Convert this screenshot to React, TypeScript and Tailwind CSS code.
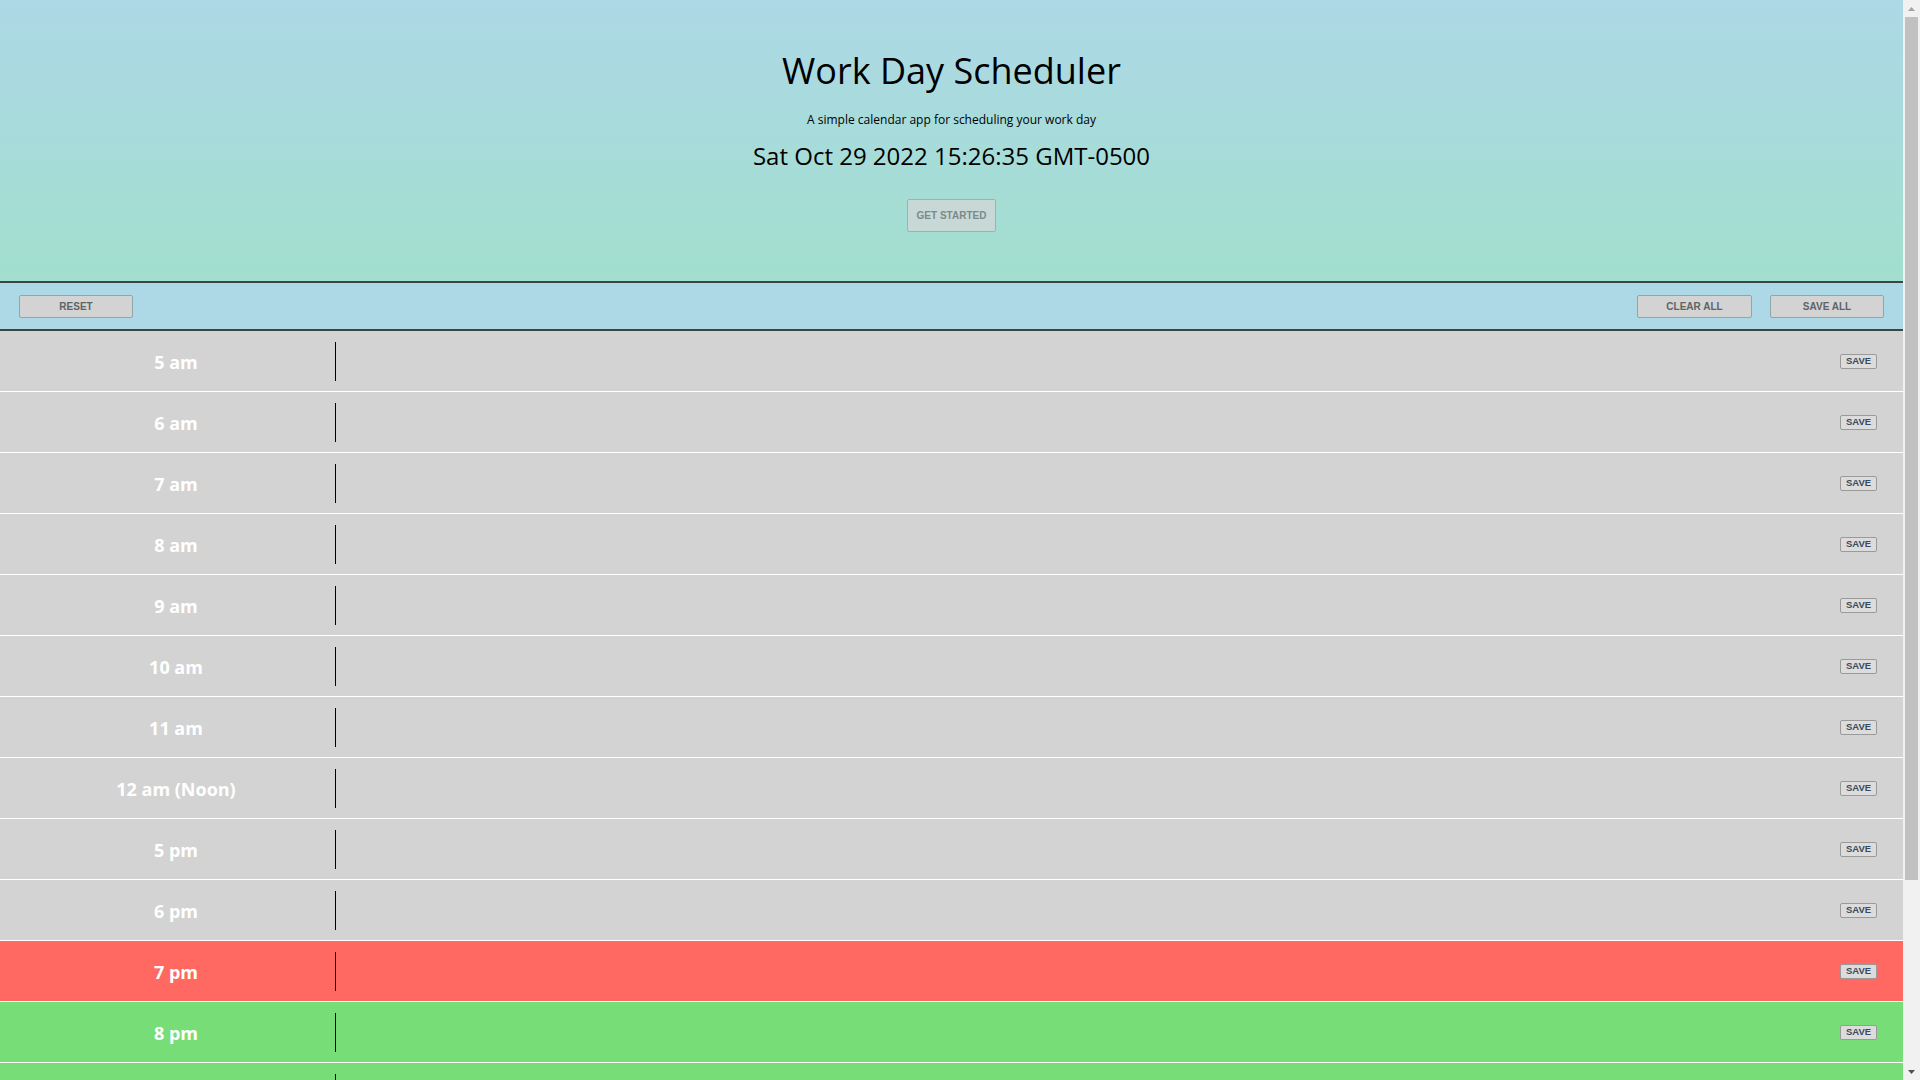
import React from "react";

type Row = { label: string; tone: "past" | "present" | "future" };

const rows: Row[] = [
  { label: "5 am", tone: "past" },
  { label: "6 am", tone: "past" },
  { label: "7 am", tone: "past" },
  { label: "8 am", tone: "past" },
  { label: "9 am", tone: "past" },
  { label: "10 am", tone: "past" },
  { label: "11 am", tone: "past" },
  { label: "12 am (Noon)", tone: "past" },
  { label: "5 pm", tone: "past" },
  { label: "6 pm", tone: "past" },
  { label: "7 pm", tone: "present" },
  { label: "8 pm", tone: "future" },
  { label: "9 pm", tone: "future" },
  { label: "10 pm", tone: "future" },
  { label: "11 pm", tone: "future" },
  { label: "12 pm", tone: "future" },
];

function TimeRow({ row }: { row: Row }) {
  const bg =
    row.tone === "past"
      ? "bg-[#d3d3d3]"
      : row.tone === "present"
      ? "bg-[#ff6961]"
      : "bg-[#77dd77]";
  return (
    <div className={`flex items-center h-[61px] shrink-0 border-b border-white ${bg}`}>
      <div className="w-[335px] pl-[17px] pt-[2px] text-center text-white text-[18px] font-bold font-['Open_Sans',sans-serif] leading-none">
        {row.label}
      </div>
      <div className="w-[1px] h-[39px] bg-black" />
      <div className="flex-1" />
      <button className="mr-[26px] w-[37px] h-[15px] flex items-center justify-center bg-[#dcdcdc] border border-[#9a9a9a] rounded-[2px] text-[9.5px] font-bold text-[#3b4a5a] font-['Liberation_Sans',Arial,sans-serif] leading-none">
        SAVE
      </button>
    </div>
  );
}

const toolBtn =
  "h-[23px] bg-[#d3d3d3] border border-[#8fa6ad] rounded-[2px] text-[10px] font-bold text-[#5e6464] font-['Liberation_Sans',Arial,sans-serif]";

function Scrollbar() {
  return (
    <div className="w-[17px] h-screen shrink-0 bg-[#f1f1f1] flex flex-col">
      <div className="h-[17px] flex items-center justify-center">
        <svg width="9" height="6" viewBox="0 0 9 6">
          <path d="M4.5 1 L8 5 L1 5 Z" fill="#a3a3a3" />
        </svg>
      </div>
      <div className="flex-1 px-[2px]">
        <div className="h-[863px] bg-[#c1c1c1]" />
      </div>
      <div className="h-[17px] flex items-center justify-center">
        <svg width="9" height="6" viewBox="0 0 9 6">
          <path d="M1 1 L8 1 L4.5 5 Z" fill="#505050" />
        </svg>
      </div>
    </div>
  );
}

export default function App() {
  return (
    <div className="flex h-screen overflow-hidden bg-white font-['Open_Sans',sans-serif]">
      <main className="flex-1 min-w-0 h-screen overflow-hidden flex flex-col">
        <header className="h-[281px] shrink-0 bg-gradient-to-b from-[#add8e6] to-[#a2dfce] flex flex-col items-center">
          <h1 className="mt-[45px] text-[36px] leading-[52px] font-normal text-black">
            Work Day Scheduler
          </h1>
          <p className="mt-[15px] text-[12px] leading-[16px] text-black">
            A simple calendar app for scheduling your work day
          </p>
          <p className="mt-[10px] text-[24px] leading-[36px] font-medium text-black">
            Sat Oct 29 2022 15:26:35 GMT-0500
          </p>
          <button className="mt-[25px] w-[89px] h-[33px] bg-[#c8d8d6] border border-[#97b5b2] rounded-[2px] text-[10px] font-bold text-[#7a8a8a] font-['Liberation_Sans',Arial,sans-serif]">
            GET STARTED
          </button>
        </header>
        <div className="h-[50px] shrink-0 bg-[#add8e6] border-y-2 border-[#3b4545] flex items-center justify-between px-[19px]">
          <button className={`w-[114px] ${toolBtn}`}>RESET</button>
          <div className="flex gap-[18px]">
            <button className={`w-[115px] ${toolBtn}`}>CLEAR ALL</button>
            <button className={`w-[114px] ${toolBtn}`}>SAVE ALL</button>
          </div>
        </div>
        <div className="flex flex-col">
          {rows.map((r) => (
            <TimeRow key={r.label} row={r} />
          ))}
        </div>
      </main>
      <Scrollbar />
    </div>
  );
}
